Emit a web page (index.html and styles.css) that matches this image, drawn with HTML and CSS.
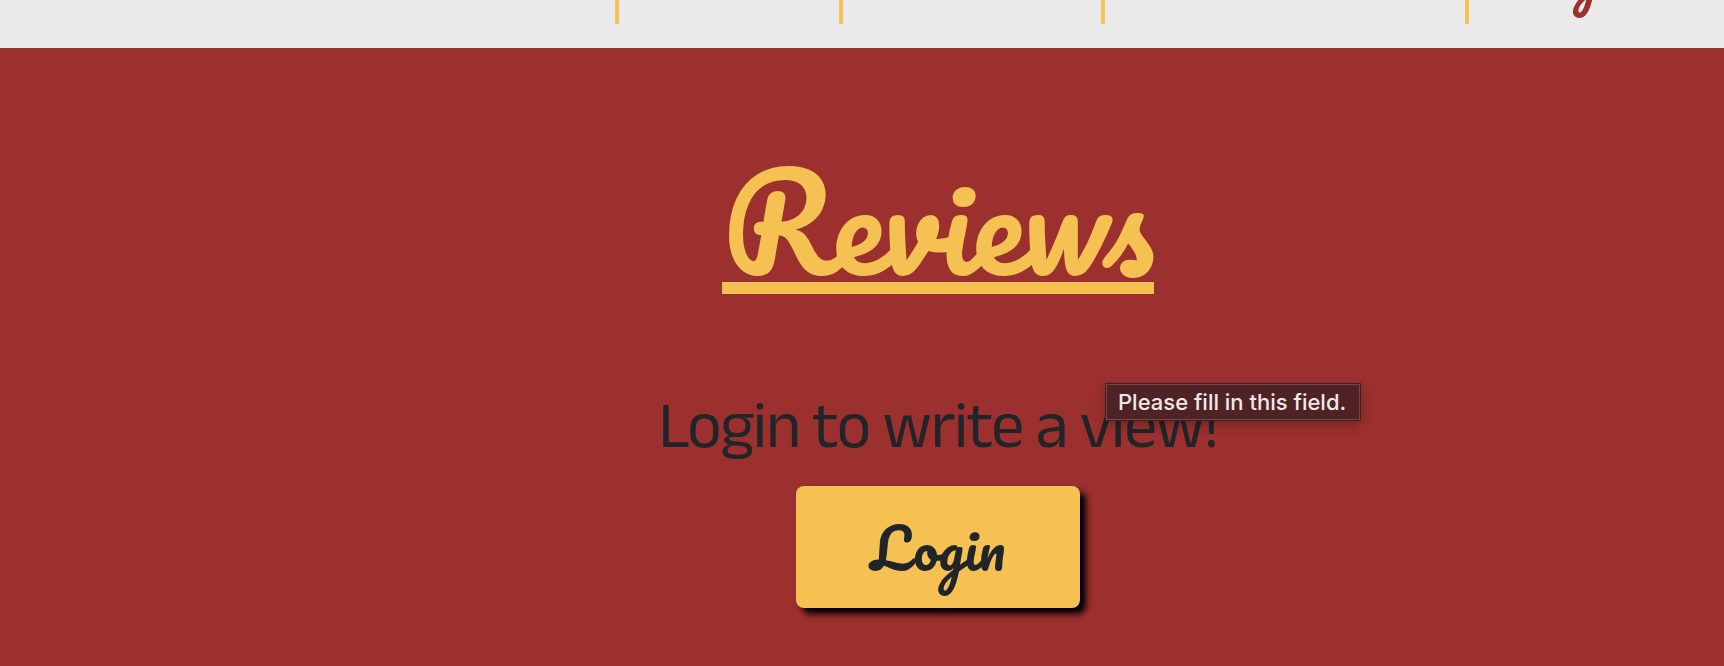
FILE: index.html
```html
<!DOCTYPE html>
<html lang="en">
<head>
<meta charset="utf-8">
<title>Reviews</title>
<link rel="stylesheet" href="styles.css">
</head>
<body>
<header class="strip">
  <div class="cell cell-a"></div>
  <div class="cell cell-b"></div>
  <div class="cell cell-c"></div>
  <div class="cell cell-d"></div>
  <div class="tail"><span class="tail-text">g</span></div>
</header>
<main class="reviews">
  <h1 class="title"><span class="title-text">Reviews</span></h1>
  <p class="prompt">Login to write a view!</p>
  <button class="login"><span class="login-text">Login</span></button>
</main>
<div class="tooltip">Please fill in this field.</div>
</body>
</html>
```
FILE: styles.css
```css
* { box-sizing: border-box; }
body {
  margin: 0;
  height: 666px;
  overflow: hidden;
  background: #9b302e;
  color: #212529;
}
.strip {
  display: flex;
  height: 48px;
  padding-bottom: 24px;
  background: #eaeaea;
}
.cell { border-right: 4px solid #f6c153; }
.cell-a { width: 619px; }
.cell-b { width: 224px; }
.cell-c { width: 262px; }
.cell-d { width: 364px; }
.tail {
  flex: 1;
  display: flex;
  align-items: flex-start;
  padding-left: 104px;
}
.tail-text {
  margin-top: -56px;
  font: 400 56px/50px Pacifico, cursive;
  color: #9b302e;
}
.reviews {
  display: flex;
  flex-direction: column;
  align-items: center;
  padding-left: 152px;
}
.title {
  display: flex;
  justify-content: center;
  width: 432px;
  height: 198px;
  margin: 48px 0 0;
  border-bottom: 12px solid #f6c153;
  padding-top: 41px;
  color: #f6c153;
}
.title-text {
  display: block;
  font: 400 128px/168px Pacifico, cursive;
  white-space: nowrap;
}
.prompt {
  margin: 85px 0 0;
  height: 107px;
  font: 400 66px/90px "Anek Latin", "Open Sans", sans-serif;
  letter-spacing: -1.2px;
  white-space: nowrap;
}
.login {
  width: 284px;
  height: 122px;
  border: 0;
  border-radius: 8px;
  padding: 0;
  background: #f6c153;
  box-shadow: 6px 6px 6px #000;
  color: #212529;
}
.login-text {
  display: block;
  font: 400 56px/80px Pacifico, cursive;
}
.tooltip {
  position: absolute;
  left: 1106px;
  top: 384px;
  width: 254px;
  height: 36px;
  border: 1px solid #724746;
  outline: 1px solid #431f21;
  padding-left: 11px;
  background: #4f2226;
  box-shadow: 0 4px 12px rgba(0, 0, 0, .3);
  color: #eee8e8;
  font: 500 22px/35px Inter, sans-serif;
  white-space: nowrap;
}
```
